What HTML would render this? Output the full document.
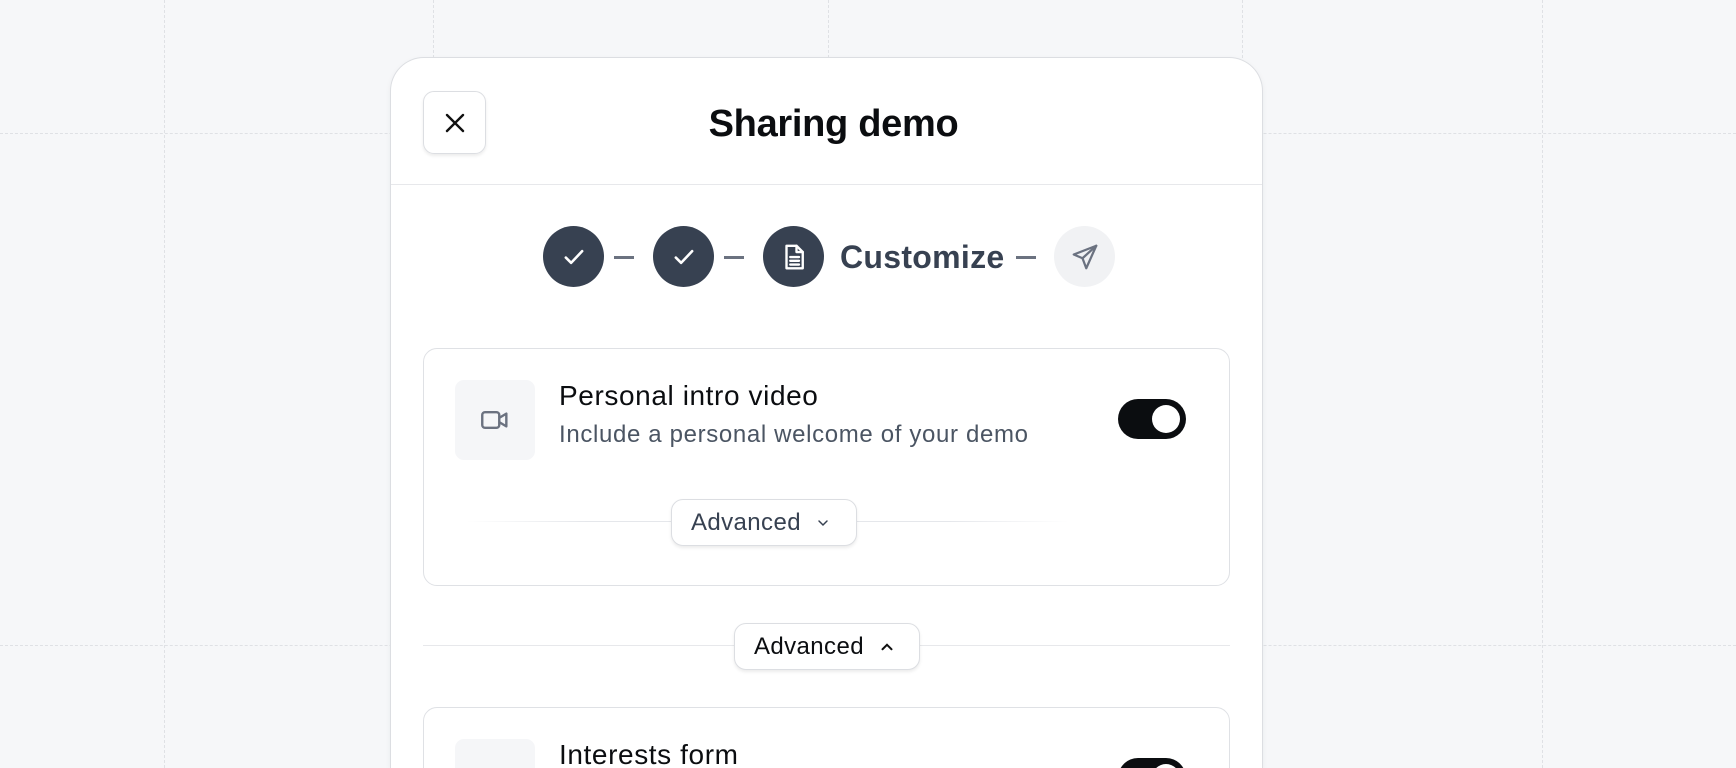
<!DOCTYPE html>
<html style="height:768px;overflow:hidden"><head><style>
*{box-sizing:border-box;margin:0;padding:0}
body{width:1736px;height:768px;overflow:hidden;background:#f6f7f9;font-family:"Liberation Sans",sans-serif;position:relative}
.v{position:absolute;top:0;bottom:0;width:0;border-left:1px dashed #dfe1e5}
.h{position:absolute;left:0;right:0;height:0;border-top:1px dashed #dfe1e5}
.modal{position:absolute;left:390px;top:57px;width:873px;height:711px;overflow:hidden;background:#fff;border:1px solid #dcdee2;border-bottom:none;border-radius:34px 34px 0 0;box-shadow:0 2px 6px rgba(0,0,0,.05)}
.close{position:absolute;left:32px;top:33px;width:63px;height:63px;border:1px solid #dcdee2;border-radius:11px;box-shadow:0 2px 3px rgba(0,0,0,.08);display:flex;align-items:center;justify-content:center}
.title{position:absolute;left:0;right:0;top:45px;text-align:center;font-size:38px;font-weight:bold;color:#0b0d10;letter-spacing:-0.3px;padding-left:14px}
.hdiv{position:absolute;left:0;right:0;top:126px;border-top:1px solid #e7e8eb}
.circ{position:absolute;width:61px;height:61px;border-radius:50%;background:#374151;display:flex;align-items:center;justify-content:center;top:168px}
.dash{position:absolute;top:198px;width:20px;height:3px;background:#6b7280}
.card{position:absolute;left:32px;width:807px;border:1.5px solid #dfe1e5;border-radius:14px;background:#fff}
.ib{position:absolute;left:31px;top:31px;width:80px;height:80px;background:#f5f6f8;border-radius:9px;display:flex;align-items:center;justify-content:center}
.ct{position:absolute;left:135px;top:31px;font-size:28px;letter-spacing:0.6px;color:#0b0d10}
.cs{position:absolute;left:135px;top:72px;font-size:24px;letter-spacing:0.65px;color:#4b5563}
.tog{position:absolute;left:694px;top:50px;width:68px;height:40px;border-radius:20px;background:#0b0d10}
.tog:after{content:"";position:absolute;right:6px;top:6px;width:28px;height:28px;border-radius:50%;background:#fff}
.pill{position:absolute;height:47px;border:1.5px solid #dcdee2;border-radius:12px;background:#fff;box-shadow:0 2px 3px rgba(0,0,0,.08);display:flex;align-items:center;padding-left:19px;font-size:24px;letter-spacing:0.4px;color:#374151;gap:14px}
</style></head><body>
<div class="v" style="left:164px"></div><div class="v" style="left:433px"></div><div class="v" style="left:828px"></div><div class="v" style="left:1242px"></div><div class="v" style="left:1542px"></div>
<div class="h" style="top:133px"></div><div class="h" style="top:645px"></div>
<div class="modal">
 <div class="close"><svg width="24" height="24" viewBox="0 0 24 24"><path d="M4 4L20 20M20 4L4 20" stroke="#111" stroke-width="2.4" stroke-linecap="round"/></svg></div>
 <div class="title">Sharing demo</div>
 <div class="hdiv"></div>
 <div class="circ" style="left:152px"><svg width="28" height="28" viewBox="0 0 24 24"><path d="M5 12.5l4.5 4.5L19 7" fill="none" stroke="#fff" stroke-width="2.2" stroke-linecap="round" stroke-linejoin="round"/></svg></div>
 <div class="dash" style="left:223px"></div>
 <div class="circ" style="left:262px"><svg width="28" height="28" viewBox="0 0 24 24"><path d="M5 12.5l4.5 4.5L19 7" fill="none" stroke="#fff" stroke-width="2.2" stroke-linecap="round" stroke-linejoin="round"/></svg></div>
 <div class="dash" style="left:333px"></div>
 <div class="circ" style="left:372px"><svg width="30" height="30" viewBox="0 0 24 24" fill="none" stroke="#fff" stroke-width="1.9" stroke-linejoin="round" stroke-linecap="round"><path d="M6 3h8l5 5v13H6z"/><path d="M14 3v5h5"/><path d="M9 12h7M9 15h7M9 18h7"/></svg></div>
 <div style="position:absolute;left:449px;top:181px;font-size:32px;font-weight:bold;color:#374151;letter-spacing:0.3px">Customize</div>
 <div class="dash" style="left:625px"></div>
 <div class="circ" style="left:663px;background:#f1f2f4"><svg width="30" height="30" viewBox="0 0 24 24" fill="none" stroke="#6b7280" stroke-width="1.8" stroke-linejoin="round" stroke-linecap="round"><path d="M21 3L3 10l7 3 3 8z"/><path d="M21 3L10 13"/></svg></div>
 <div class="card" style="top:290px;height:238px">
  <div class="ib"><svg width="34" height="34" viewBox="0 0 24 24" fill="none" stroke="#6b7280" stroke-width="1.7" stroke-linejoin="round"><rect x="3" y="6.5" width="12" height="11" rx="2"/><path d="M15 10.5l5-3v9l-5-3"/></svg></div>
  <div class="ct">Personal intro video</div>
  <div class="cs">Include a personal welcome of your demo</div>
  <div class="tog"></div>
  <div style="position:absolute;left:42px;top:172px;width:603px;height:1px;background:linear-gradient(90deg,rgba(229,231,235,0),#e5e7eb 20%,#e5e7eb 80%,rgba(229,231,235,0))"></div>
  <div class="pill" style="left:247px;top:150px;width:186px">Advanced<svg width="16" height="16" viewBox="0 0 24 24"><path d="M6 9l6 6 6-6" fill="none" stroke="#374151" stroke-width="2.2" stroke-linecap="round"/></svg></div>
 </div>
 <div style="position:absolute;left:32px;top:587px;width:807px;height:1px;background:#e7e8eb"></div>
 <div class="pill" style="left:343px;top:565px;width:186px;color:#0b0d10">Advanced<svg width="18" height="18" viewBox="0 0 24 24"><path d="M6 15l6-6 6 6" fill="none" stroke="#111" stroke-width="2.6" stroke-linecap="round"/></svg></div>
 <div class="card" style="top:649px;height:200px">
  <div class="ib"></div>
  <div class="ct" style="top:31px">Interests form</div>
  <div class="tog" style="top:50px"></div>
 </div>
</div>
</body></html>
